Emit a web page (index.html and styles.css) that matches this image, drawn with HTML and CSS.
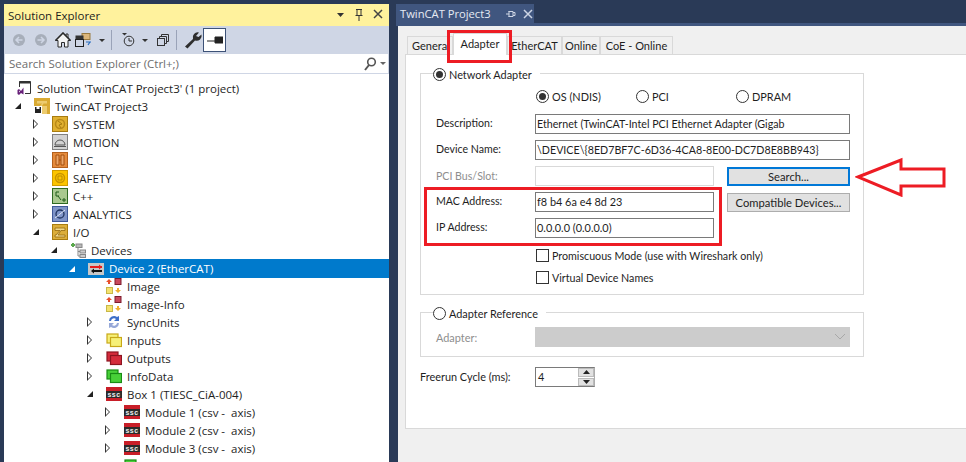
FILE: index.html
```html
<!DOCTYPE html>
<html lang="en">
<head>
    <meta charset="UTF-8">
    <title>TwinCAT Project3</title>
    <link rel="stylesheet" href="styles.css">
</head>
<body>
    <svg class="defs" width="0" height="0">
        <symbol id="i-gold" viewBox="0 0 16 16"><rect x=".5" y=".5" width="15" height="15" fill="#e0b030" stroke="#a87c10"/><circle cx="8" cy="8" r="4.5" fill="none" stroke="#b98a18" stroke-width="1.5"/><path d="M6 5l4 3-3 1 2 3" fill="none" stroke="#a87c10"/></symbol>
        <symbol id="i-motion" viewBox="0 0 16 16"><rect x=".5" y=".5" width="15" height="15" fill="#d2d2d2" stroke="#808080"/><path d="M3 11a5 5 0 0 1 10 0zM2 12.500h12" fill="none" stroke="#555"/></symbol>
        <symbol id="i-plc" viewBox="0 0 16 16"><rect x=".5" y=".5" width="15" height="15" fill="#e58b3c" stroke="#b4601c"/><path d="M4 3h3v10H4zM9 3h3v10H9zM7 8h2" fill="#eda668" stroke="#a4500f"/></symbol>
        <symbol id="i-safety" viewBox="0 0 16 16"><rect x=".5" y=".5" width="15" height="15" fill="#fcc400" stroke="#d09c00"/><circle cx="8" cy="8" r="4.500" fill="none" stroke="#c99500" stroke-width="1.500"/><path d="M6 6h4v4H6z" fill="none" stroke="#b98a00"/></symbol>
        <symbol id="i-cpp" viewBox="0 0 16 16"><rect x=".5" y=".5" width="15" height="15" fill="#a9c88f" stroke="#2f6a22"/><path d="M7 4H4v4h3M6 8l3 4M10 12h4M12 10v4" fill="none" stroke="#1f5a18"/></symbol>
        <symbol id="i-analytics" viewBox="0 0 16 16"><rect x=".5" y=".5" width="15" height="15" fill="#7f94c8" stroke="#3f5898"/><circle cx="8" cy="8" r="4" fill="none" stroke="#20345f" stroke-width="1.300"/><path d="M3 12l10-8" stroke="#dfe6f5"/></symbol>
        <symbol id="i-io" viewBox="0 0 16 16"><rect x=".5" y=".5" width="15" height="15" fill="#dcae3a" stroke="#a87c10"/><path d="M3 4h10v2.500H9L6 11h7v2H3v-2h1l4-4.500H3z" fill="#f2d98c" stroke="#94690c" stroke-width=".8"/></symbol>
        <symbol id="i-project" viewBox="0 0 16 16"><rect width="16" height="16" fill="#d9aa33"/><path d="M3 3h10v2.500H9.500L8 8h5v8H0V8h6l2-2.500H3z" fill="#eccb70"/><rect y="8" width="8" height="8" fill="#fff"/><path d="M1 9h6v6H1z" fill="#222"/><rect x="2.500" y="9" width="3" height="2" fill="#fff"/></symbol>
        <symbol id="i-solution" viewBox="0 0 16 16"><path d="M3.500 7V1.500h11v12H9" fill="#fff" stroke="#333"/><path d="M3 1.500h11.500v2H3z" fill="#333"/><rect x="1" y="7" width="8" height="8.500" fill="#fff"/><path d="M7.500 7.500v7L5 13 3 15l-1.500-1v-4L3 9l2 2z" fill="#68217a"/><path d="M3 10.500v2l1-1z" fill="#fff"/></symbol>
        <symbol id="i-devices" viewBox="0 0 16 16"><path d="M3 1v4M1 3h4" stroke="#5aa84c" stroke-width="2"/><rect x="6" y="2" width="6" height="3.500" fill="#b8b8b8" stroke="#888"/><rect x="10" y="8" width="5.500" height="3" fill="#ccc" stroke="#888"/><rect x="10" y="12.500" width="5.500" height="3" fill="#ccc" stroke="#888"/><path d="M8 5.500v8.500h2M8 9.500h2" fill="none" stroke="#888"/></symbol>
        <symbol id="i-device" viewBox="0 0 16 16"><rect y="2" width="16" height="12" fill="#c8c8c8"/><path d="M2 6h12" stroke="#e81c1c" stroke-width="2"/><path d="M14 6l-3-2.500v5z" fill="#e81c1c"/><path d="M5 10h9" stroke="#111" stroke-width="2"/><path d="M3 10l3-2.500v5z" fill="#111"/></symbol>
        <symbol id="i-image" viewBox="0 0 16 16"><path d="M0 4l3-3 3 3H4v2H2V4z" fill="#e8502c"/><rect x="9" y=".5" width="6" height="6" fill="#c8485c" stroke="#7c1c2c"/><rect x=".5" y="9.500" width="6" height="6" fill="#f4e270" stroke="#c8b848"/><path d="M9 12l3 3 3-3h-2v-2h-2v2z" fill="#f0b030"/></symbol>
        <symbol id="i-sync" viewBox="0 0 16 16"><path d="M3 7a5 5 0 0 1 8-4l2-1v5H8l2-2a3 3 0 0 0-5 2z" fill="#3d6fc8"/><path d="M13 9a5 5 0 0 1-8 4l-2 1V9h5l-2 2a3 3 0 0 0 5-2z" fill="#96a8d8"/></symbol>
        <symbol id="i-inputs" viewBox="0 0 16 16"><rect x="1" y="2" width="11" height="9" fill="#f6f078" stroke="#c8a818" stroke-width="1.200"/><rect x="4.500" y="5.500" width="11" height="9" fill="#f6f078" stroke="#c8a818" stroke-width="1.200"/></symbol>
        <symbol id="i-outputs" viewBox="0 0 16 16"><rect x="1" y="2" width="11" height="9" fill="#d42c3c" stroke="#8c1420" stroke-width="1.200"/><rect x="4.500" y="5.500" width="11" height="9" fill="#d42c3c" stroke="#8c1420" stroke-width="1.200"/></symbol>
        <symbol id="i-info" viewBox="0 0 16 16"><rect x="1" y="2" width="11" height="9" fill="#48d038" stroke="#188c14" stroke-width="1.200"/><rect x="4.500" y="5.500" width="11" height="9" fill="#48d038" stroke="#188c14" stroke-width="1.200"/></symbol>
        <symbol id="i-ssc" viewBox="0 0 16 16"><rect y="1" width="16" height="14" fill="#c81e28"/><rect y="5" width="16" height="7" fill="#2a2a2a"/></symbol>
    </svg>

    <div class="app">
        <!-- left tool window -->
        <div class="explorer">
            <div class="title-bar">
                <span class="title-text">Solution Explorer</span>
                <span class="title-btns">
                    <svg width="10" height="16" viewBox="0 0 10 16"><path d="M1 6h7l-3.500 4z" fill="#333"/></svg>
                    <svg width="12" height="16" viewBox="0 0 12 16"><path d="M4 2v6M8 2v6M3 2.500h6M2.500 8.500h7M6 9v5" fill="none" stroke="#333"/></svg>
                    <svg width="12" height="16" viewBox="0 0 12 16"><path d="M2 3l8 8M10 3l-8 8" stroke="#444" stroke-width="1.500"/></svg>
                </span>
            </div>
            <div class="toolbar">
                <svg class="tb w22" height="16" viewBox="0 0 22 16"><circle cx="11" cy="8" r="6" fill="#a7aeba"/><path d="M14.500 8h-6M11 5L8 8l3 3" fill="none" stroke="#cfd6e5" stroke-width="1.500"/></svg>
                <svg class="tb w22" height="16" viewBox="0 0 22 16"><circle cx="11" cy="8" r="6" fill="#a7aeba"/><path d="M7.500 8h6M11 5l3 3-3 3" fill="none" stroke="#cfd6e5" stroke-width="1.500"/></svg>
                <svg class="tb w22" height="16" viewBox="0 0 22 16"><path d="M11 1L3.500 8.500H6v6.500h3.500v-4.500h3V15H16V8.500h2.500L16 6V2h-2v2z" fill="#f4f4f4" stroke="#2a2a2a"/><path d="M3.500 8.500L11 1l7.500 7.500" fill="none" stroke="#2a2a2a" stroke-width="1.600"/></svg>
                <svg class="tb w20" height="16" viewBox="0 0 20 16"><rect x="8" y="1.500" width="8" height="6" fill="#dcb67a" stroke="#9a7a40"/><rect x="1.500" y="3.500" width="8" height="4" fill="#333"/><rect x="1.500" y="7.500" width="8" height="7" fill="#cfd6e5" stroke="#222"/><path d="M12 10h5M16 10l-2 3" fill="none" stroke="#2a6fc0" stroke-width="1.200"/></svg>
                <svg class="tb w9 caret-a" height="16" viewBox="0 0 9 16"><path d="M1 7h6L4 10z" fill="#333"/></svg>
                <span class="tb-sep sep-a"></span>
                <svg class="tb w20" height="16" viewBox="0 0 20 16"><path d="M3 1h5L5.500 3.500z" fill="#333"/><circle cx="10" cy="9" r="4.800" fill="none" stroke="#333"/><path d="M10 6v3h3" fill="none" stroke="#333"/></svg>
                <svg class="tb w9 caret-b" height="16" viewBox="0 0 9 16"><path d="M1 7h6L4 10z" fill="#333"/></svg>
                <svg class="tb w22 collapse" height="16" viewBox="0 0 22 16"><rect x="6.500" y="6.500" width="7" height="7" fill="none" stroke="#333"/><path d="M8.500 6V4.500h7v7H14M10.500 4V2.500h7v7H16" fill="none" stroke="#333"/></svg>
                <span class="tb-sep sep-b"></span>
                <svg class="tb w24" height="18" viewBox="0 0 24 18"><path d="M19 1.500a5 5 0 0 0-6 6.500l-8 7.500 2.500 2 7.500-8a5 5 0 0 0 6.500-6l-3 2.500-2.500-1z" fill="#2e2e2e"/></svg>
                <span class="tb-active"><svg width="16" height="8" viewBox="0 0 16 8"><path d="M0 5h8M8 1h8v6H8z" fill="#222" stroke="#222"/></svg></span>
            </div>
            <div class="search-box">
                <span class="search-text">Search Solution Explorer (Ctrl+;)</span>
                <svg width="26" height="16" viewBox="0 0 26 16"><circle cx="9.500" cy="6" r="3.800" fill="none" stroke="#555" stroke-width="1.600"/><path d="M7 9l-4 5" stroke="#555" stroke-width="2"/><path d="M18 6h6l-3 3z" fill="#666"/></svg>
            </div>
            <div class="tree">
                <div class="row lv0"><svg class="ico"><use href="#i-solution"/></svg><span class="lbl">Solution 'TwinCAT Project3' (1 project)</span></div>
                <div class="row lv1"><span class="arr open"></span><svg class="ico"><use href="#i-project"/></svg><span class="lbl">TwinCAT Project3</span></div>
                <div class="row lv2"><span class="arr"></span><svg class="ico"><use href="#i-gold"/></svg><span class="lbl">SYSTEM</span></div>
                <div class="row lv2"><span class="arr"></span><svg class="ico"><use href="#i-motion"/></svg><span class="lbl">MOTION</span></div>
                <div class="row lv2"><span class="arr"></span><svg class="ico"><use href="#i-plc"/></svg><span class="lbl">PLC</span></div>
                <div class="row lv2"><span class="arr"></span><svg class="ico"><use href="#i-safety"/></svg><span class="lbl">SAFETY</span></div>
                <div class="row lv2"><span class="arr"></span><svg class="ico"><use href="#i-cpp"/></svg><span class="lbl">C++</span></div>
                <div class="row lv2"><span class="arr"></span><svg class="ico"><use href="#i-analytics"/></svg><span class="lbl">ANALYTICS</span></div>
                <div class="row lv2"><span class="arr open"></span><svg class="ico"><use href="#i-io"/></svg><span class="lbl">I/O</span></div>
                <div class="row lv3"><span class="arr open"></span><svg class="ico"><use href="#i-devices"/></svg><span class="lbl">Devices</span></div>
                <div class="row lv4 selected"><span class="arr open"></span><svg class="ico"><use href="#i-device"/></svg><span class="lbl">Device 2 (EtherCAT)</span></div>
                <div class="row lv5"><span class="arr none"></span><svg class="ico"><use href="#i-image"/></svg><span class="lbl">Image</span></div>
                <div class="row lv5"><span class="arr none"></span><svg class="ico"><use href="#i-image"/></svg><span class="lbl">Image-Info</span></div>
                <div class="row lv5"><span class="arr"></span><svg class="ico"><use href="#i-sync"/></svg><span class="lbl">SyncUnits</span></div>
                <div class="row lv5"><span class="arr"></span><svg class="ico"><use href="#i-inputs"/></svg><span class="lbl">Inputs</span></div>
                <div class="row lv5"><span class="arr"></span><svg class="ico"><use href="#i-outputs"/></svg><span class="lbl">Outputs</span></div>
                <div class="row lv5"><span class="arr"></span><svg class="ico"><use href="#i-info"/></svg><span class="lbl">InfoData</span></div>
                <div class="row lv5"><span class="arr open"></span><svg class="ico" viewBox="0 0 16 16"><use href="#i-ssc"/><text x="8" y="10.800" class="ssc-text">ssc</text></svg><span class="lbl">Box 1 (TIESC_CiA-004)</span></div>
                <div class="row lv6"><span class="arr"></span><svg class="ico" viewBox="0 0 16 16"><use href="#i-ssc"/><text x="8" y="10.800" class="ssc-text">ssc</text></svg><span class="lbl">Module 1 (csv -&nbsp; axis)</span></div>
                <div class="row lv6"><span class="arr"></span><svg class="ico" viewBox="0 0 16 16"><use href="#i-ssc"/><text x="8" y="10.800" class="ssc-text">ssc</text></svg><span class="lbl">Module 2 (csv -&nbsp; axis)</span></div>
                <div class="row lv6"><span class="arr"></span><svg class="ico" viewBox="0 0 16 16"><use href="#i-ssc"/><text x="8" y="10.800" class="ssc-text">ssc</text></svg><span class="lbl">Module 3 (csv -&nbsp; axis)</span></div>
                <div class="row lv6"><span class="arr none"></span><svg class="ico"><use href="#i-info"/></svg></div>
            </div>
        </div>

        <!-- document area -->
        <div class="document">
            <div class="doc-tab">
                <span>TwinCAT Project3</span>
                <svg width="12" height="12" viewBox="0 0 12 12"><path d="M4 3v6M3.500 3.500h4.500v5H3.500M1 6h3M8 4.500h2v3H8" fill="none" stroke="#cdd5e4"/></svg>
                <svg width="12" height="12" viewBox="0 0 12 12"><path d="M2 2l8 8M10 2l-8 8" stroke="#cdd5e4" stroke-width="1.500"/></svg>
            </div>
            <div class="doc-band"></div>
            <div class="doc-body">
                <div class="tabs">
                    <span class="tab t-general"><span>General</span></span>
                    <span class="tab t-adapter">Adapter</span>
                    <span class="tab t-ethercat">EtherCAT</span>
                    <span class="tab t-online">Online</span>
                    <span class="tab t-coe">CoE - Online</span>
                </div>
                <div class="tab-page">
                    <div class="group net-group">
                        <div class="group-title"><span class="radio on"></span>Network Adapter</div>
                        <div class="radio-row">
                            <span class="radio-item"><span class="radio on"></span>OS (NDIS)</span>
                            <span class="radio-item"><span class="radio"></span>PCI</span>
                            <span class="radio-item"><span class="radio"></span>DPRAM</span>
                        </div>
                        <div class="form-grid">
                            <label>Description:</label>
                            <div class="field span-3">Ethernet (TwinCAT-Intel PCI Ethernet Adapter (Gigab</div>
                            <label>Device Name:</label>
                            <div class="field span-3">\DEVICE\{8ED7BF7C-6D36-4CA8-8E00-DC7D8E8BB943}</div>
                            <label class="disabled">PCI Bus/Slot:</label>
                            <div class="field off"></div>
                            <button class="btn focus">Search...</button>
                            <label>MAC Address:</label>
                            <div class="field">f8 b4 6a e4 8d 23</div>
                            <button class="btn">Compatible Devices...</button>
                            <label>IP Address:</label>
                            <div class="field">0.0.0.0 (0.0.0.0)</div>
                        </div>
                        <div class="check-row"><span class="check"></span>Promiscuous Mode (use with Wireshark only)</div>
                        <div class="check-row"><span class="check"></span>Virtual Device Names</div>
                    </div>
                    <div class="group ref-group">
                        <div class="group-title"><span class="radio"></span>Adapter Reference</div>
                        <div class="ref-row">
                            <label class="disabled">Adapter:</label>
                            <div class="select-off"><svg width="12" height="8" viewBox="0 0 12 8"><path d="M1 1l5 5 5-5" fill="none" stroke="#a8a8a8"/></svg></div>
                        </div>
                    </div>
                    <div class="cycle-row">
                        <label>Freerun Cycle (ms):</label>
                        <div class="spinner">
                            <span class="spin-val">4</span>
                            <span class="spin-btns">
                                <span class="spin-btn"><svg width="7" height="4" viewBox="0 0 7 4"><path d="M3.500 0L7 4H0z" fill="#222"/></svg></span>
                                <span class="spin-btn"><svg width="7" height="4" viewBox="0 0 7 4"><path d="M3.500 4L7 0H0z" fill="#222"/></svg></span>
                            </span>
                        </div>
                    </div>
                </div>
            </div>
        </div>
    </div>

    <!-- red annotations drawn over the screenshot -->
    <div class="mark mark-tab"></div>
    <div class="mark mark-mac"></div>
    <svg class="mark-arrow" width="92" height="40" viewBox="0 0 92 40"><path d="M3 20L46 3v9h43v17H46v9z" fill="#fff" stroke="#ed1c24" stroke-width="3"/></svg>
</body>
</html>
```

FILE: styles.css
```css
html, body {
    margin: 0;
    height: 100%;
    overflow: hidden;
}

body {
    position: relative;
    background-color: #2a3a57;
    font-family: "Open Sans", sans-serif;
    font-size: 12px;
    color: #1e1e1e;
}

.defs {
    position: absolute;
}

.ssc-text {
    font-family: "Liberation Sans", sans-serif;
    font-size: 7px;
    font-weight: bold;
    fill: #eee;
    text-anchor: middle;
    letter-spacing: .4px;
}

.app {
    display: flex;
    height: 462px;
}

/* Solution Explorer */
.explorer {
    width: 385px;
    margin: 4px 7px 0 4px;
    background-color: #fff;
    display: flex;
    flex-direction: column;
    overflow: hidden;
}

.title-bar {
    height: 22px;
    flex: none;
    background-color: #fff29d;
    display: flex;
    align-items: center;
    justify-content: space-between;
    padding: 0 4px;
}

.title-text {
    font-size: 11.5px;
}

.title-btns {
    display: flex;
    gap: 7px;
    padding-right: 1px;
}

.toolbar {
    height: 28px;
    flex: none;
    background-color: #cfd6e5;
    display: flex;
    align-items: center;
    padding-left: 4px;
}

.tb {
    flex: none;
}

.w9 { width: 9px; }
.w20 { width: 20px; }
.w22 { width: 22px; }
.w24 { width: 24px; }

.caret-a { margin-left: 4px; }
.caret-b { margin-left: 2px; }
.collapse { margin-left: 1px; }

.tb-sep {
    width: 1px;
    height: 20px;
    background-color: #9aa3b8;
}

.sep-a { margin: 0 7px 0 4px; }
.sep-b { margin: 0 3px; }

.tb-active {
    width: 21px;
    height: 22px;
    margin-left: -1px;
    background-color: #fff;
    border: 1px solid #3d5277;
    display: flex;
    align-items: center;
    justify-content: center;
}

.search-box {
    height: 20px;
    flex: none;
    box-sizing: border-box;
    background-color: #fff;
    border: 1px solid #cfd6e5;
    border-top: 0;
    display: flex;
    align-items: center;
    justify-content: space-between;
    padding: 0 0 0 4px;
}

.search-text {
    color: #6d6d6d;
    font-size: 11.5px;
}

.tree {
    padding-top: 5px;
    flex: 1;
}

.row {
    height: 18px;
    display: flex;
    align-items: center;
    white-space: nowrap;
}

.row.selected {
    background-color: #007acc;
    color: #fff;
    height: 19px;
    margin-bottom: -1px;
}

.lv0 { padding-left: 12px; }
.lv1 { padding-left: 8px; }
.lv2 { padding-left: 26px; }
.lv3 { padding-left: 44px; }
.lv4 { padding-left: 62px; }
.lv5 { padding-left: 80px; }
.lv6 { padding-left: 98px; }

.arr {
    width: 22px;
    height: 10px;
    flex: none;
    position: relative;
}

/* collapsed node: hollow triangle */
.arr::before {
    content: "";
    position: absolute;
    left: 3px;
    top: 0;
    border-left: 5px solid #333;
    border-top: 5px solid transparent;
    border-bottom: 5px solid transparent;
}

.arr::after {
    content: "";
    position: absolute;
    left: 4px;
    top: 2px;
    border-left: 3px solid #fff;
    border-top: 3px solid transparent;
    border-bottom: 3px solid transparent;
}

.arr.none::before, .arr.none::after {
    display: none;
}

/* expanded node: solid corner triangle */
.arr.open::before {
    left: 3px;
    top: 2px;
    border-left: 6px solid transparent;
    border-top: 0;
    border-bottom: 6px solid #222;
}

.arr.open::after {
    display: none;
}

.selected .arr.open::before {
    border-bottom-color: #fff;
}

.ico {
    width: 16px;
    height: 16px;
    flex: none;
}

.lbl {
    margin-left: 5px;
    font-size: 11.5px;
}

/* document tab */
.document {
    flex: 1;
    display: flex;
    flex-direction: column;
    padding-top: 4px;
    min-width: 0;
}

.doc-tab {
    width: 138px;
    height: 19px;
    flex: none;
    box-sizing: border-box;
    background-color: #40567f;
    color: #e6ebf3;
    display: flex;
    align-items: center;
    gap: 5px;
    padding-left: 4px;
    font-size: 11.2px;
}

.doc-tab span {
    width: 100px;
}

.doc-band {
    height: 3px;
    flex: none;
    background-color: #40567f;
}

.doc-body {
    margin-left: 2px;
    background-color: #f0f0f0;
    flex: 1;
    padding: 10px 0 0 7px;
}

/* property page */
.tabs {
    display: flex;
    height: 18px;
    align-items: flex-end;
    font-family: Lato, sans-serif;
    font-size: 11px;
}

.tab {
    height: 18px;
    box-sizing: border-box;
    border: 1px solid #d9d9d9;
    border-bottom: 0;
    background-color: #f0f0f0;
    display: flex;
    align-items: center;
    justify-content: center;
    flex: none;
    overflow: hidden;
}

.t-general { width: 46px; margin-left: 2px; justify-content: flex-start; padding-left: 4px; }
.t-adapter { width: 54px; height: 22px; background-color: #fff; position: relative; z-index: 1; margin-bottom: -1px; padding-bottom: 3px; }
.t-ethercat { width: 55px; }
.t-online { width: 38px; }
.t-coe { width: 73px; }

.tab-page {
    height: 375px;
    box-sizing: border-box;
    background-color: #fff;
    border: 1px solid #d9d9d9;
    border-right: 0;
    padding: 18px 0 0 14px;
    font-family: Lato, sans-serif;
    font-size: 10.9px;
}

.group {
    width: 444px;
    box-sizing: border-box;
    border: 1px solid #d9d9d9;
}

.net-group {
    height: 222px;
}

.ref-group {
    height: 45px;
    margin-top: 17px;
}

.group-title {
    width: fit-content;
    height: 16px;
    margin: -8px 0 0 12px;
    padding-right: 8px;
    background-color: #fff;
    display: flex;
    align-items: center;
    gap: 3px;
}

.radio {
    width: 11px;
    height: 11px;
    flex: none;
    border: 1px solid #333;
    border-radius: 50%;
    background-color: #fff;
    position: relative;
}

.radio.on::after {
    content: "";
    position: absolute;
    left: 2px;
    top: 2px;
    width: 7px;
    height: 7px;
    border-radius: 50%;
    background-color: #333;
}

.radio-row {
    display: flex;
    margin: 6px 0 0 115px;
    height: 16px;
}

.radio-item {
    width: 100px;
    display: flex;
    align-items: center;
    gap: 3px;
}

.form-grid {
    display: grid;
    grid-template-columns: 99px 179px 13px 123px;
    grid-auto-rows: 20px;
    row-gap: 6px;
    align-items: center;
    margin: 10px 0 0 15px;
}

.form-grid label {
    font-size: 10.6px;
    padding-bottom: 3px;
}

.form-grid label.disabled {
    padding-bottom: 0;
}

.field {
    height: 20px;
    box-sizing: border-box;
    border: 1px solid #7a7a7a;
    padding: 0 1px;
    line-height: 18px;
    white-space: nowrap;
    overflow: hidden;
    grid-column-start: 2;
}

.field.span-3 {
    grid-column: 2 / span 3;
    font-size: 10.7px;
}

.field.off {
    border-color: #d9d9d9;
}

.disabled {
    color: #8e8e8e;
}

.btn {
    grid-column-start: 4;
    height: 19px;
    padding: 0;
    border: 1px solid #adadad;
    background-color: #e1e1e1;
    font: inherit;
    font-size: 11.2px;
    color: inherit;
}

.btn.focus {
    border: 2px solid #0078d7;
}

.check-row {
    display: flex;
    align-items: center;
    gap: 3px;
    height: 16px;
    margin: 9px 0 0 115px;
    font-size: 10.7px;
}

.check-row + .check-row {
    margin-top: 6px;
}

.check {
    width: 11px;
    height: 11px;
    flex: none;
    border: 1px solid #333;
}

.ref-row {
    display: flex;
    align-items: center;
    margin: 6px 0 0 15px;
}

.ref-row label {
    width: 99px;
}

.select-off {
    width: 315px;
    height: 20px;
    background-color: #cccccc;
    display: flex;
    align-items: center;
    justify-content: flex-end;
    padding-right: 4px;
    box-sizing: border-box;
}

.cycle-row {
    display: flex;
    align-items: center;
    margin-top: 10px;
}

.cycle-row label {
    width: 115px;
    padding-bottom: 2px;
}

.spinner {
    width: 60px;
    height: 20px;
    box-sizing: border-box;
    border: 1px solid #7a7a7a;
    border-right-color: #adadad;
    display: flex;
}

.spin-val {
    flex: 1;
    padding-left: 2px;
    line-height: 18px;
}

.spin-btns {
    width: 16px;
    display: flex;
    flex-direction: column;
    gap: 1px;
}

.spin-btn {
    flex: 1;
    background-color: #e1e1e1;
    border: 1px solid #bbb;
    display: flex;
    align-items: center;
    justify-content: center;
}

/* annotations */
.mark {
    position: absolute;
    box-sizing: border-box;
    border: 3px solid #ed1c24;
}

.mark-tab {
    left: 447px;
    top: 30px;
    width: 65px;
    height: 33px;
}

.mark-mac {
    left: 424px;
    top: 187px;
    width: 298px;
    height: 59px;
}

.mark-arrow {
    position: absolute;
    left: 855px;
    top: 157px;
}
```
